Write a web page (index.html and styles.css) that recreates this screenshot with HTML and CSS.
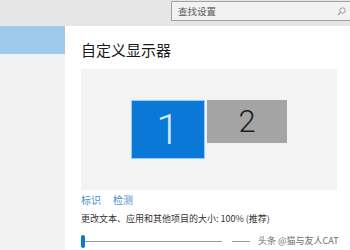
FILE: index.html
```html
<!DOCTYPE html>
<html lang="zh-CN">
<head>
<meta charset="utf-8">
<link rel="stylesheet" href="styles.css">
</head>
<body>
<div class="app">
  <div class="topbar">
    <div class="search">
      <span class="search-text">查找设置</span>
      <svg class="search-icon" width="9" height="9" viewBox="0 0 9 9"><circle cx="5.5" cy="3.5" r="2.7" fill="none" stroke="#9a9a9a" stroke-width="1"/><line x1="3.5" y1="5.5" x2="0.8" y2="8.2" stroke="#9a9a9a" stroke-width="1.2"/></svg>
    </div>
  </div>
  <div class="main">
    <div class="sidebar">
      <div class="nav-item selected"></div>
    </div>
    <div class="content">
      <div class="title">自定义显示器</div>
      <div class="preview">
        <div class="monitor primary"><span>1</span></div>
        <div class="monitor secondary"><span>2</span></div>
      </div>
      <div class="links">
        <span class="link">标识</span>
        <span class="link">检测</span>
      </div>
      <div class="scale-label">更改文本、应用和其他项目的大小: 100% (推荐)</div>
      <div class="slider-row">
        <span class="thumb"></span>
        <span class="track"></span>
        <span class="track short"></span>
        <span class="watermark">头条 @猫与友人CAT</span>
      </div>
    </div>
  </div>
</div>
</body>
</html>
```
FILE: styles.css
```css
html, body {
  margin: 0;
  padding: 0;
}
body {
  width: 350px;
  height: 250px;
  overflow: hidden;
  font-family: "Noto Sans CJK SC", "Noto Sans", sans-serif;
  background: #ffffff;
}
.app {
  display: flex;
  flex-direction: column;
  height: 250px;
}
.topbar {
  height: 26px;
  background: #e6e6e6;
  display: flex;
  justify-content: flex-end;
  align-items: flex-start;
  flex-shrink: 0;
}
.search {
  box-sizing: border-box;
  width: 179px;
  height: 20px;
  margin-top: 1px;
  border: 1px solid #a2a2a2;
  border-right: none;
  background: #f2f2f2;
  display: flex;
  align-items: center;
  justify-content: space-between;
  padding: 0 4px 0 6px;
}
.search-text {
  font-size: 9.5px;
  line-height: 12px;
  color: #5a5a5a;
}
.search-icon {
  display: block;
}
.main {
  flex: 1;
  display: flex;
}
.sidebar {
  width: 65px;
  background: #f2f2f2;
  flex-shrink: 0;
}
.nav-item.selected {
  height: 28px;
  background: #a0c9ee;
}
.content {
  flex: 1;
  padding-left: 16px;
  background: #ffffff;
}
.title {
  margin-top: 15px;
  font-size: 15px;
  line-height: 18px;
  color: #1a1a1a;
}
.preview {
  margin-top: 10px;
  width: 256px;
  height: 121px;
  background: #f3f3f3;
  display: flex;
  align-items: flex-start;
  gap: 2px;
  box-sizing: border-box;
  padding: 31px 0 0 50px;
}
.monitor {
  display: flex;
  align-items: center;
  justify-content: center;
  box-sizing: border-box;
  font-family: Roboto, "DejaVu Sans", sans-serif;
  font-weight: 300;
}
.monitor.primary {
  width: 74px;
  height: 59px;
  background: #0a78d6;
  border: 1px solid #8fcfff;
  color: #d6ecff;
  font-size: 42px;
}
.monitor.secondary {
  width: 80px;
  height: 43px;
  background: #a4a4a4;
  color: #1e1e1e;
  font-size: 31px;
}
.monitor span {
  line-height: 1;
}
.links {
  margin-top: 3px;
  display: flex;
  gap: 12px;
  font-size: 10px;
  line-height: 14px;
}
.link {
  color: #4a8fcc;
}
.scale-label {
  margin-top: 5px;
  font-size: 9px;
  line-height: 14px;
  color: #333333;
  white-space: nowrap;
}
.slider-row {
  margin-top: 8px;
  height: 14px;
  display: flex;
  align-items: center;
}
.thumb {
  width: 4px;
  height: 13px;
  border-radius: 2px;
  background: #0a78d6;
  flex-shrink: 0;
}
.track {
  width: 137px;
  height: 1px;
  background: #9a9a9a;
  flex-shrink: 0;
}
.track.short {
  width: 18px;
  margin-left: 10px;
}
.watermark {
  margin-left: 8px;
  font-size: 9px;
  line-height: 12px;
  color: #6e6e6e;
  white-space: nowrap;
  text-shadow: 0 0 2px #ffffff;
}
```
